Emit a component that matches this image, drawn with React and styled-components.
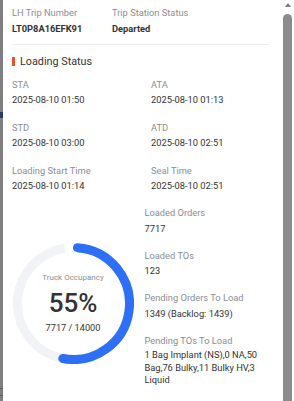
import React from 'react';
import styled, { createGlobalStyle } from 'styled-components';

const GlobalStyle = createGlobalStyle`
  html, body {
    margin: 0;
    padding: 0;
    background: #ffffff;
  }
  body {
    font-family: Roboto, "Liberation Sans", Arial, sans-serif;
    -webkit-font-smoothing: antialiased;
  }
`;

const tripInfo = [
  { label: 'LH Trip Number', value: 'LT0P8A16EFK91' },
  { label: 'Trip Station Status', value: 'Departed' },
];

const times = [
  { label: 'STA', value: '2025-08-10 01:50' },
  { label: 'ATA', value: '2025-08-10 01:13' },
  { label: 'STD', value: '2025-08-10 03:00' },
  { label: 'ATD', value: '2025-08-10 02:51' },
  { label: 'Loading Start Time', value: '2025-08-10 01:14' },
  { label: 'Seal Time', value: '2025-08-10 02:51' },
];

const counts = [
  { label: 'Loaded Orders', value: '7717' },
  { label: 'Loaded TOs', value: '123' },
  { label: 'Pending Orders To Load', value: '1349 (Backlog: 1439)' },
  {
    label: 'Pending TOs To Load',
    value: '1 Bag Implant (NS),0 NA,50 Bag,76 Bulky,11 Bulky HV,3 Liquid',
    wrap: true,
  },
];

// arc helper, angles in degrees clockwise from 12 o'clock
const polar = (cx, cy, r, deg) => {
  const a = ((deg - 90) * Math.PI) / 180;
  return [cx + r * Math.cos(a), cy + r * Math.sin(a)];
};

const arcPath = (cx, cy, r, from, to) => {
  const [x1, y1] = polar(cx, cy, r, from);
  const [x2, y2] = polar(cx, cy, r, to);
  const large = to - from > 180 ? 1 : 0;
  return `M ${x1} ${y1} A ${r} ${r} 0 ${large} 1 ${x2} ${y2}`;
};

const OccupancyRing = ({ loaded, capacity }) => {
  const size = 121;
  const c = size / 2;
  const r = 56;
  const start = 4;
  const end = 191;
  return (
    <Ring>
      <svg width={size} height={size} viewBox={`0 0 ${size} ${size}`}>
        <path d={arcPath(c, c, r, end, 351)} fill="none" stroke="#f2f3f7" strokeWidth="9" />
        <path
          d={arcPath(c, c, r, start, end)}
          fill="none"
          stroke="#2d6ff5"
          strokeWidth="9"
          strokeLinecap="round"
        />
      </svg>
      <RingText>
        <RingCaption>Truck Occupancy</RingCaption>
        <RingPercent>{Math.round((loaded / capacity) * 100)}%</RingPercent>
        <RingRatio>
          {loaded} / {capacity}
        </RingRatio>
      </RingText>
    </Ring>
  );
};

const App = () => {
  return (
    <>
      <GlobalStyle />
      <Page>
        <Backdrop />
        <Drawer>
          <Content>
            <Header>
              {tripInfo.map((item) => (
                <Field key={item.label}>
                  <Label>{item.label}</Label>
                  <StrongValue>{item.value}</StrongValue>
                </Field>
              ))}
            </Header>

            <SectionTitle>Loading Status</SectionTitle>

            <TimeGrid>
              {times.map((item) => (
                <Field key={item.label}>
                  <Label>{item.label}</Label>
                  <Value>{item.value}</Value>
                </Field>
              ))}
            </TimeGrid>

            <Lower>
              <OccupancyRing loaded={7717} capacity={14000} />
              <CountList>
                {counts.map((item) => (
                  <CountField key={item.label}>
                    <Label>{item.label}</Label>
                    <Value $wrap={item.wrap}>{item.value}</Value>
                  </CountField>
                ))}
              </CountList>
            </Lower>
          </Content>
          <Scrollbar>
            <ScrollArrow />
            <ScrollThumb />
          </Scrollbar>
        </Drawer>
      </Page>
    </>
  );
};

export default App;

const Page = styled.div`
  display: flex;
  width: 294px;
  height: 401px;
  overflow: hidden;
`;

const Backdrop = styled.div`
  width: 3px;
  flex-shrink: 0;
  background:
    linear-gradient(#2e3a66, #2e3a66) 0 112px / 3px 6px no-repeat,
    linear-gradient(#5a5a5a, #5a5a5a) 0 388px / 3px 1px no-repeat,
    linear-gradient(#5a5a5a, #5a5a5a) 0 395px / 3px 1px no-repeat,
    #7f7f7f;
`;

const Drawer = styled.div`
  flex: 1;
  display: flex;
  background: #ffffff;
`;

const Content = styled.div`
  flex: 1;
  padding: 6px 14px 0 9px;
  color: #333333;
`;

const Header = styled.div`
  display: grid;
  grid-template-columns: 100px 1fr;
  padding-bottom: 8px;
  border-bottom: 1px solid #ececec;
`;

const Field = styled.div`
  display: flex;
  flex-direction: column;
  gap: 1px;
`;

const Label = styled.div`
  font-size: 9.3px;
  line-height: 14px;
  color: #8a8d94;
  white-space: nowrap;
`;

const Value = styled.div`
  font-size: 9.3px;
  line-height: ${(p) => (p.$wrap ? '12.5px' : '14px')};
  color: #333333;
  white-space: ${(p) => (p.$wrap ? 'normal' : 'nowrap')};
`;

const StrongValue = styled(Value)`
  font-weight: 700;
  margin-top: 1px;
`;

const SectionTitle = styled.div`
  display: flex;
  align-items: center;
  gap: 5px;
  margin-top: 8px;
  height: 16px;
  font-size: 10.8px;
  color: #333333;

  &::before {
    content: '';
    width: 3px;
    height: 9px;
    background: #ee4d2d;
  }
`;

const TimeGrid = styled.div`
  display: grid;
  grid-template-columns: 139px 1fr;
  row-gap: 14px;
  margin-top: 9px;
`;

const Lower = styled.div`
  display: flex;
  align-items: flex-start;
  margin-top: 13px;
`;

const Ring = styled.div`
  position: relative;
  width: 121px;
  height: 121px;
  margin: 37px 11px 0 0.5px;
  flex-shrink: 0;

  svg {
    display: block;
  }
`;

const RingText = styled.div`
  position: absolute;
  inset: 0;
  display: flex;
  flex-direction: column;
  align-items: center;
  justify-content: center;
`;

const RingCaption = styled.div`
  font-size: 8px;
  line-height: 10px;
  color: #8a8d94;
`;

const RingPercent = styled.div`
  font-size: 26px;
  line-height: 30px;
  font-weight: 500;
  color: #333333;
  margin-top: 5px;
`;

const RingRatio = styled.div`
  font-size: 9.2px;
  line-height: 12px;
  color: #333333;
  margin-top: 4px;
`;

const CountList = styled.div`
  flex: 1;
  display: flex;
  flex-direction: column;
  gap: 13px;
`;

const CountField = styled(Field)`
  gap: 1.5px;
`;

const Scrollbar = styled.div`
  width: 11px;
  flex-shrink: 0;
  display: flex;
  flex-direction: column;
  background: #ffffff;
`;

const ScrollArrow = styled.div`
  width: 0;
  height: 0;
  margin: 3px 0 0 1.5px;
  border-left: 3.5px solid transparent;
  border-right: 3.5px solid transparent;
  border-bottom: 4px solid #7a7a7a;
`;

const ScrollThumb = styled.div`
  flex: 1;
  width: 9px;
  margin-top: 7px;
  border-radius: 5px 5px 0 0;
  background: #8c8c8c;
`;
